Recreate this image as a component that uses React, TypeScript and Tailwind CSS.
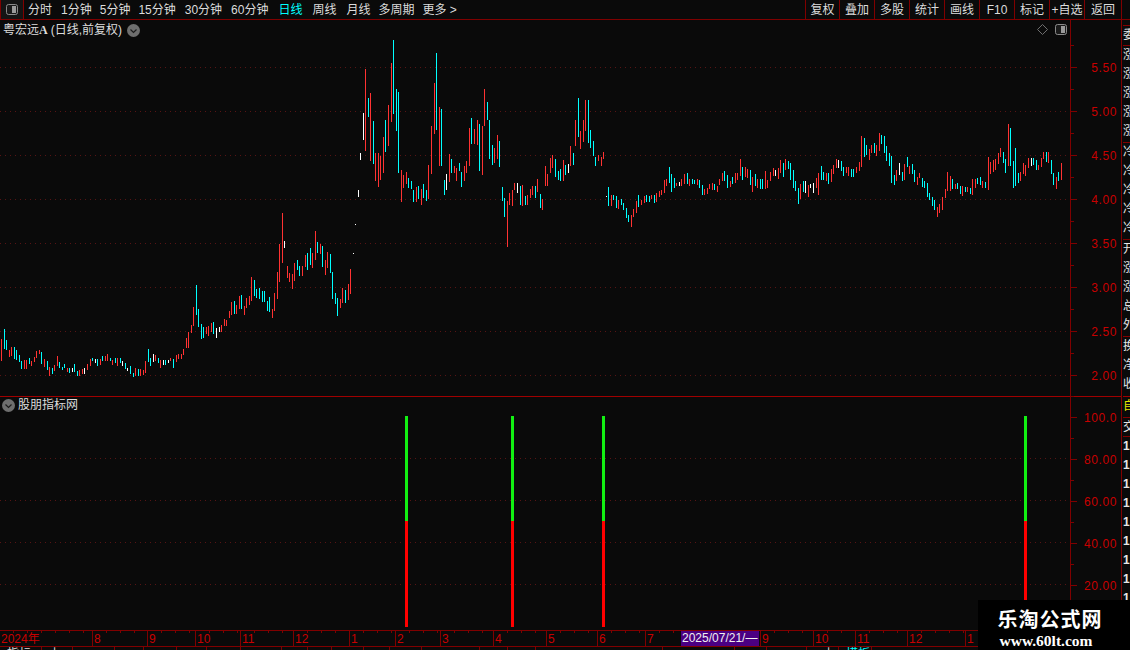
import React from "react";

const UI_FONT = "font-['Liberation_Sans','Noto_Sans_CJK_SC',sans-serif]";

// candle segments read off the chart, "x top bottom colour" at 3x from the given origin
const traces: { ox: number; oy: number; rows: string }[] = [
  {
    ox: 0,
    oy: 320,
    rows: "4 57 123 r,13 27 87 c,19 60 90 c,28 90 110 r,34 82 107 r,43 82 117 c,49 90 120 c,58 105 125 c,64 123 147 c,73 120 147 r,79 120 145 r,88 114 130 c,94 123 138 r,103 111 126 r,109 93 113 r,118 90 102 r,124 96 132 c,133 117 141 r,142 123 150 c,148 141 168 r,157 144 162 c,163 135 153 r,172 108 138 r,178 126 144 c,187 141 150 c,193 132 144 c,202 144 156 r,208 144 159 c,217 144 156 w,223 132 156 c,232 153 168 c,238 150 168 r,247 147 162 r,253 144 162 w,262 132 150 r,271 117 138 r,277 114 123 c,286 117 129 w,292 117 138 c,301 117 135 r,307 108 123 c,316 108 123 r,322 102 123 r,331 114 123 c,337 120 135 r,346 114 129 c,352 114 138 r,361 114 129 c,367 123 138 w,376 129 147 c,382 144 153 w,391 138 162 c,400 159 171 c,406 144 168 r,415 147 168 c,421 147 168 r,430 150 165 r,436 123 159 r,445 87 126 c,451 114 138 c,460 102 126 w,466 105 123 r,475 114 129 c,481 120 144 r,490 120 135 w,496 120 135 c,505 120 129 w,511 114 123 r,520 117 144 c,529 105 126 r,535 102 117 r,544 102 117 r,550 87 105 r",
  },
  {
    ox: 180,
    oy: 200,
    rows: "18 414 444 r,25 396 444 r,34 375 399 r,40 321 378 r,49 255 345 c,55 327 381 c,64 372 417 c,70 381 414 c,79 381 402 r,85 378 408 r,94 369 396 r,100 366 402 c,109 384 414 w,118 381 396 w,124 375 396 r,133 357 378 r,139 360 378 r,148 333 354 r,154 306 345 r,163 303 342 c,169 315 342 r,178 288 327 r,184 285 327 c,193 318 345 r,199 294 324 r,208 288 315 r,214 231 303 r,223 240 288 c,229 267 294 c,238 264 297 c,247 273 306 c,253 273 306 c,262 303 333 c,268 291 336 c,277 327 354 r,283 279 333 r,292 216 297 r,298 132 246 r,307 39 189 r,313 123 144 w,322 198 234 r,328 219 246 r,337 222 267 r,343 189 243 r,352 180 210 c,358 198 228 c,367 198 228 r,376 165 201 r,382 159 210 c,391 144 195 c,397 159 204 r,406 93 180 r,412 126 159 c,421 132 162 r,427 138 201 c,436 180 225 r,442 156 204 r,451 162 219 c,457 216 297 c,466 279 312 c,472 294 348 c,481 297 324 r,487 264 309 r,496 270 309 c,505 252 300 r,511 207 282 r,520 159 162 w,526 72 75 w",
  },
  {
    ox: 340,
    oy: 30,
    rows: "55 480 501 w,61 369 390 w,70 249 330 w,76 117 363 r,85 204 261 c,91 189 393 r,100 273 402 c,106 369 453 r,115 369 471 r,121 378 450 r,130 321 429 r,136 270 366 c,145 225 348 r,154 99 276 r,160 30 252 c,169 178 303 c,175 186 429 c,184 420 516 r,190 435 474 r,199 426 462 r,205 444 474 c,214 453 477 c,220 480 516 c,229 471 516 r,235 468 507 c,244 477 525 r,250 462 504 c,259 480 513 c,265 405 507 r,274 288 432 r,283 159 312 r,289 69 300 c,298 231 408 r,304 237 408 c,313 450 495 c,319 432 480 w,328 372 456 r,334 387 429 c,343 408 429 r,349 414 453 r,358 399 423 c,364 426 471 c,373 408 453 r,379 393 429 r,388 294 408 r,394 264 342 c,403 297 342 r,412 270 345 r,418 282 423 c,427 288 435 r,433 177 288 r,442 216 270 c,448 270 387 c,457 345 405 c,463 354 399 r,472 315 387 r,478 333 411 c,487 471 513 c,493 504 561 c,502 513 651 r,508 489 525 r,517 480 528 r,523 459 480 r,532 459 489 w,541 468 525 c,547 465 528 r,556 498 525 c,562 495 525 r,571 477 504 r,577 468 495 r,586 468 504 c,592 447 486 r,601 492 534 c,607 507 540 r,616 408 468 r,622 432 468 r,631 384 429 r,637 375 414 r,646 387 441 c,655 423 450 c,661 417 453 c,670 390 453 r,676 405 435 c,685 402 429 w,691 348 408 r,700 369 405 c,706 270 348 r,715 204 321 c,721 303 357 r,730 270 336 r,736 210 303 r,745 210 339 c,751 300 354 c,760 333 378 c,766 381 408 c,775 375 393 r,784 381 408 r,790 366 387 r,799 498 501 w,805 471 528 c",
  },
  {
    ox: 600,
    oy: 120,
    rows: "34 225 258 r,40 225 240 c,49 228 264 c,55 240 267 r,64 237 255 c,70 249 270 c,79 264 294 c,85 285 306 c,94 285 321 r,100 267 291 r,109 243 279 r,115 225 261 c,124 240 255 r,133 228 249 r,139 225 246 c,148 228 246 c,154 225 237 r,163 225 249 c,169 219 246 r,178 213 231 r,184 210 225 r,193 180 219 r,199 177 198 r,208 141 189 c,214 162 216 c,223 174 204 c,229 189 198 r,238 186 198 w,244 177 198 r,253 162 192 r,262 159 192 c,268 177 198 r,277 177 192 c,283 180 192 c,292 177 195 r,298 180 204 c,307 195 225 c,313 207 225 r,322 204 222 r,328 192 207 r,337 189 210 r,343 192 210 c,352 198 216 r,358 177 195 r,367 159 183 r,373 153 183 c,382 165 204 c,391 183 201 r,397 171 192 c,406 159 189 r,412 159 180 r,421 117 168 r,427 141 180 c,436 141 171 r,442 147 174 r,451 150 195 c,457 171 216 r,466 162 198 c,472 177 204 r,481 177 207 c,487 177 207 c,496 153 207 r,502 180 204 r,511 156 183 r,520 144 168 r,526 150 168 w,535 144 177 r,541 120 159 r,550 129 171 c,556 117 150 r,565 123 147 c,571 129 180 c,580 150 204 c,586 183 213 c,595 204 252 c,601 192 237 r,610 183 216 c,616 183 219 w,625 195 231 r,631 192 204 w,640 189 219 w,649 174 204 r,655 159 225 r,664 138 180 c,670 156 180 c,679 159 183 r,685 159 192 c,694 147 186 r,700 135 162 r,709 117 144 r,715 120 144 w",
  },
  {
    ox: 840,
    oy: 120,
    rows: "4 123 153 c,10 141 168 c,19 141 159 r,25 141 168 r,34 147 171 c,40 147 171 c,49 141 159 r,58 126 153 r,64 48 141 r,73 54 111 c,79 75 105 c,88 87 120 r,94 75 99 r,103 69 99 c,109 75 108 r,118 39 93 r,124 45 72 c,133 48 99 c,139 78 123 c,148 99 138 c,154 108 189 c,163 165 195 c,169 150 183 r,178 129 165 w,187 156 183 c,193 132 180 r,202 111 141 c,208 138 162 r,217 132 162 c,223 150 186 c,232 171 195 r,238 159 174 r,247 174 201 c,253 183 204 c,262 189 231 c,268 219 240 c,277 231 258 c,283 240 270 c,292 261 291 r,298 252 279 r,307 231 270 r,316 207 234 r,322 156 213 r,331 168 213 r,337 177 207 c,346 192 207 r,352 189 207 c,361 198 222 c,367 198 228 r,376 201 216 c,382 201 216 r,391 204 222 c,397 177 225 r,406 177 204 r,412 174 192 c,421 171 195 c,427 183 204 r,436 186 204 c,445 111 210 r,451 126 162 r,460 120 156 r,466 117 150 r,475 99 132 r,481 84 111 r,490 96 129 c,496 117 159 c,505 12 138 r,511 24 138 c,520 123 204 c,526 84 198 c,535 159 189 c,541 156 183 r,550 129 162 r,556 135 168 r,565 114 144 r,574 114 138 w,580 114 135 c,589 120 150 c,595 135 150 r,604 114 141 r,610 96 117 r,619 96 126 c,625 96 129 r,634 120 162 c,640 159 195 c,649 171 207 r,655 156 183 c,664 129 180 r",
  },
];

const candleColors: Record<string, string> = { r: "#ff3232", c: "#00ffff", w: "#ffffff" };

const candles = traces.flatMap(({ ox, oy, rows }) =>
  rows.split(",").map((row) => {
    const [x, top, bottom, color] = row.split(" ");
    return {
      x: ox + Math.floor(Number(x) / 3),
      y1: oy + Math.floor(Number(top) / 3),
      y2: oy + Math.ceil(Number(bottom) / 3),
      color: candleColors[color],
    };
  })
);

const periods = [
  { label: "分时", className: "ml-[4px]" },
  { label: "1分钟", className: "ml-[9px]" },
  { label: "5分钟", className: "ml-[8px]" },
  { label: "15分钟", className: "ml-[8px]" },
  { label: "30分钟", className: "ml-[9px]" },
  { label: "60分钟", className: "ml-[9px]" },
  { label: "日线", className: "ml-[10px] text-[#00ffff]" },
  { label: "周线", className: "ml-[10px]" },
  { label: "月线", className: "ml-[10px]" },
  { label: "多周期", className: "ml-[8px]" },
  { label: "更多 >", className: "ml-[8px]" },
];

const tools = [
  { label: "复权", className: "w-[34px]" },
  { label: "叠加", className: "w-[35px]" },
  { label: "多股", className: "w-[35px]" },
  { label: "统计", className: "w-[35px]" },
  { label: "画线", className: "w-[35px]" },
  { label: "F10", className: "w-[35px]" },
  { label: "标记", className: "w-[35px]" },
  { label: "+自选", className: "w-[35px]" },
  { label: "返回", className: "w-[37px]" },
];

const months = [
  { label: "2024年", className: "w-[92px]" },
  { label: "8", className: "w-[55px]" },
  { label: "9", className: "w-[48px]" },
  { label: "10", className: "w-[45px]" },
  { label: "11", className: "w-[53px]" },
  { label: "12", className: "w-[56px]" },
  { label: "1", className: "w-[46px]" },
  { label: "2", className: "w-[45px]" },
  { label: "3", className: "w-[53px]" },
  { label: "4", className: "w-[53px]" },
  { label: "5", className: "w-[51px]" },
  { label: "6", className: "w-[48px]" },
  { label: "7", className: "w-[115px]" },
  { label: "9", className: "w-[53px]" },
  { label: "10", className: "w-[42px]" },
  { label: "11", className: "w-[52px]" },
  { label: "12", className: "w-[58px]" },
  { label: "1", className: "w-[165px]" },
];

const footerCells = [
  { label: "指标", className: "w-[42px]" },
  { label: "上", className: "w-[31px] pl-[5px]" },
  { label: "", className: "w-[42px]" },
  { label: "", className: "w-[29px]" },
  { label: "", className: "w-[33px]" },
  { label: "", className: "w-[30px]" },
  { label: "", className: "w-[34px]" },
  { label: "", className: "w-[41px]" },
  { label: "", className: "w-[26px]" },
  { label: "", className: "w-[24px]" },
  { label: "", className: "w-[32px]" },
  { label: "", className: "w-[26px]" },
  { label: "", className: "w-[32px]" },
  { label: "", className: "w-[58px]" },
  { label: "", className: "w-[28px]" },
  { label: "", className: "w-[28px]" },
  { label: "", className: "w-[127px]" },
  { label: "", className: "w-[72px]" },
  { label: "", className: "w-[32px]" },
  { label: "", className: "w-[40px]" },
  { label: "上", className: "w-[32px] pl-[16px]" },
  { label: "模板", className: "w-[33px] pl-[1px] text-[#00ffff]" },
];

const sideGroups = [
  { chars: ["委"], className: "h-[20px] border-t" },
  { chars: ["涨", "涨", "涨", "涨", "涨"], className: "h-[97px] border-t" },
  { chars: ["冷", "冷", "冷", "冷", "冷"], className: "h-[97px] border-t" },
  { chars: ["开", "涨", "涨", "总", "外"], className: "h-[97px] border-t" },
  { chars: ["换", "净", "收"], className: "h-[60px] border-t" },
];

const priceLabels = ["5.50", "5.00", "4.50", "4.00", "3.50", "3.00", "2.50", "2.00"];
const indicatorLabels = ["100.0", "80.00", "60.00", "40.00", "20.00"];
const signalBars = [405, 511, 602, 1024];

function PanelIcon() {
  return (
    <svg width="12" height="11" viewBox="0 0 12 11">
      <rect x="0.5" y="0.5" width="11" height="10" rx="2" fill="#1a1a1a" stroke="#8a8a8a" />
      <rect x="6" y="2" width="4" height="7" fill="#9a9a9a" />
    </svg>
  );
}

function ChevronBadge({ className }: { className: string }) {
  return (
    <svg width="13" height="13" viewBox="0 0 13 13" className={className}>
      <circle cx="6.5" cy="6.5" r="6.5" fill="#6e6e6e" />
      <path d="M3.5 5.5 L6.5 8.5 L9.5 5.5" fill="none" stroke="#1c1c1c" strokeWidth="1.2" />
    </svg>
  );
}

function AxisColumn({ labels, rowClass, className }: { labels: string[]; rowClass: string; className: string }) {
  return (
    <div className={`w-[51px] shrink-0 border-l border-[#800000] ${className}`}>
      {labels.map((label) => (
        <div key={label} className={`relative flex items-center justify-between ${rowClass}`}>
          <span className="absolute top-0 left-0 h-px w-[3px] bg-[#800000]" />
          <span className="h-px w-[6px] bg-[#800000]" />
          <span className="pt-[2px] pr-[4px] text-[12px] leading-none tracking-[0.6px] text-[#c80000]">{label}</span>
        </div>
      ))}
    </div>
  );
}

export default function App() {
  return (
    <div className={`flex h-[650px] w-[1130px] flex-col overflow-hidden bg-[#0a0a0a] ${UI_FONT}`}>
      {/* top toolbar */}
      <div className="flex h-[20px] shrink-0 items-center border-b border-[#800000] text-[12px] text-[#dcdcdc]">
        <div className="flex h-full w-[24px] items-center justify-center border-x border-[#800000] bg-[#141414]">
          <PanelIcon />
        </div>
        {periods.map((item) => (
          <span key={item.label} className={`whitespace-nowrap ${item.className}`}>
            {item.label}
          </span>
        ))}
        <div className="flex-1" />
        {tools.map((item) => (
          <div
            key={item.label}
            className={`flex h-full items-center justify-center whitespace-nowrap border-l border-[#800000] ${item.className}`}
          >
            {item.label}
          </div>
        ))}
        <div className="h-full w-[9px] border-l border-[#800000]" />
      </div>

      <div className="flex h-[610px] shrink-0">
        <div className="flex w-[1121px] shrink-0 flex-col">
          {/* price pane */}
          <div className="flex h-[377px] shrink-0 border-b border-[#a00000]">
            <div className="relative w-[1070px] shrink-0">
              <svg width="1070" height="376" viewBox="0 20 1070 376" className="block" shapeRendering="crispEdges">
                {[67, 111, 155, 199, 243, 287, 331, 375].map((y) => (
                  <line key={y} x1="0" x2="1068" y1={y + 0.5} y2={y + 0.5} stroke="#571414" strokeDasharray="1 4" />
                ))}
                {candles.map((c, i) => (
                  <line key={i} x1={c.x + 0.5} x2={c.x + 0.5} y1={c.y1} y2={c.y2} stroke={c.color} />
                ))}
              </svg>
              <div className="absolute top-[2px] left-[3px] flex items-center text-[12px] leading-[16px] text-[#dcdcdc]">
                <span>粤宏远</span>
                <span className="font-['Liberation_Serif',serif] font-bold">A</span>
                <span className="ml-[3px]">(日线,前复权)</span>
                <ChevronBadge className="ml-[5px]" />
              </div>
              <div className="absolute top-[4px] right-[3px] flex items-center gap-[7px]">
                <svg width="11" height="11" viewBox="0 0 11 11">
                  <path d="M5.5 0.5 L10.5 5.5 L5.5 10.5 L0.5 5.5 Z" fill="none" stroke="#6e6e6e" />
                </svg>
                <PanelIcon />
              </div>
            </div>
            <AxisColumn labels={priceLabels} rowClass="h-[44px]" className="pt-[25px]" />
          </div>

          {/* indicator pane */}
          <div className="flex h-[233px] shrink-0">
            <div className="relative w-[1070px] shrink-0">
              <svg width="1070" height="233" viewBox="0 397 1070 233" className="block" shapeRendering="crispEdges">
                {[459, 501, 543, 585].map((y) => (
                  <line key={y} x1="0" x2="1068" y1={y - 0.5} y2={y - 0.5} stroke="#571414" strokeDasharray="1 4" />
                ))}
                {signalBars.map((x) => (
                  <g key={x}>
                    <rect x={x} y="416" width="3" height="105" fill="#12f012" />
                    <rect x={x} y="521" width="3" height="106" fill="#ff0000" />
                  </g>
                ))}
              </svg>
              <div className="absolute top-0 left-[2px] flex items-center text-[12px] leading-[16px] text-[#dcdcdc]">
                <ChevronBadge className="" />
                <span className="ml-[3px]">股朋指标网</span>
              </div>
            </div>
            <AxisColumn labels={indicatorLabels} rowClass="h-[42px]" className="-mt-px pb-px" />
          </div>
        </div>

        {/* clipped quote list on the right edge */}
        <div className="w-[9px] shrink-0 overflow-hidden border-l border-[#800000] pt-[5px] pl-px text-[12px] leading-[19px] text-[#e6e6e6]">
          {sideGroups.map((group, i) => (
            <div key={i} className={`w-[20px] border-[#800000] ${group.className}`}>
              {group.chars.map((ch, j) => (
                <div key={j}>{ch}</div>
              ))}
            </div>
          ))}
          <div className="h-[21px] w-[20px] border-t border-[#a00000] text-[#e6e600]">自</div>
          <div className="h-[20px] w-[20px] border-y border-[#800000]">交</div>
          {[0, 1, 2, 3, 4, 5, 6, 7, 8].map((n) => (
            <div key={n} className="h-[19px] w-[20px] font-bold">
              1
            </div>
          ))}
        </div>
      </div>

      {/* time axis */}
      <div className="relative flex h-[17px] shrink-0 border-y border-[#800000] text-[12px] leading-[17px] text-[#c80000]">
        {months.map((m, i) => (
          <div
            key={i}
            className={`h-full shrink-0 bg-[repeating-linear-gradient(90deg,transparent_0,transparent_13px,#800000_13px,#800000_14px)] bg-[length:100%_2px] bg-no-repeat pl-[1px] ${
              i > 0 ? "border-l border-[#800000]" : ""
            } ${m.className}`}
          >
            {m.label}
          </div>
        ))}
        <div className="absolute top-0 left-[681px] h-[15px] w-[78px] bg-[#4b0082] pl-[1px] leading-[15px] whitespace-nowrap text-[#f0f0f0]">
          2025/07/21/—
        </div>
      </div>

      {/* table header peeking out at the bottom */}
      <div className="flex h-[3px] shrink-0 overflow-hidden text-[12px] leading-[14px] text-[#dcdcdc]">
        {footerCells.map((cell, i) => (
          <div key={i} className={`h-[16px] shrink-0 border-r border-[#800000] pl-[7px] ${cell.className}`}>
            {cell.label}
          </div>
        ))}
      </div>

      {/* watermark pasted over the corner */}
      <div className="absolute top-[600px] left-[978px] flex h-[50px] w-[152px] flex-col items-center bg-black pt-[8px] pr-[8px] text-white">
        <span className="text-[20px] leading-[24px] font-bold tracking-[1px]">乐淘公式网</span>
        <span className="mt-[1px] mr-[8px] font-['Liberation_Serif',serif] text-[15.5px] leading-[15px] font-bold">www.60lt.com</span>
      </div>
    </div>
  );
}
